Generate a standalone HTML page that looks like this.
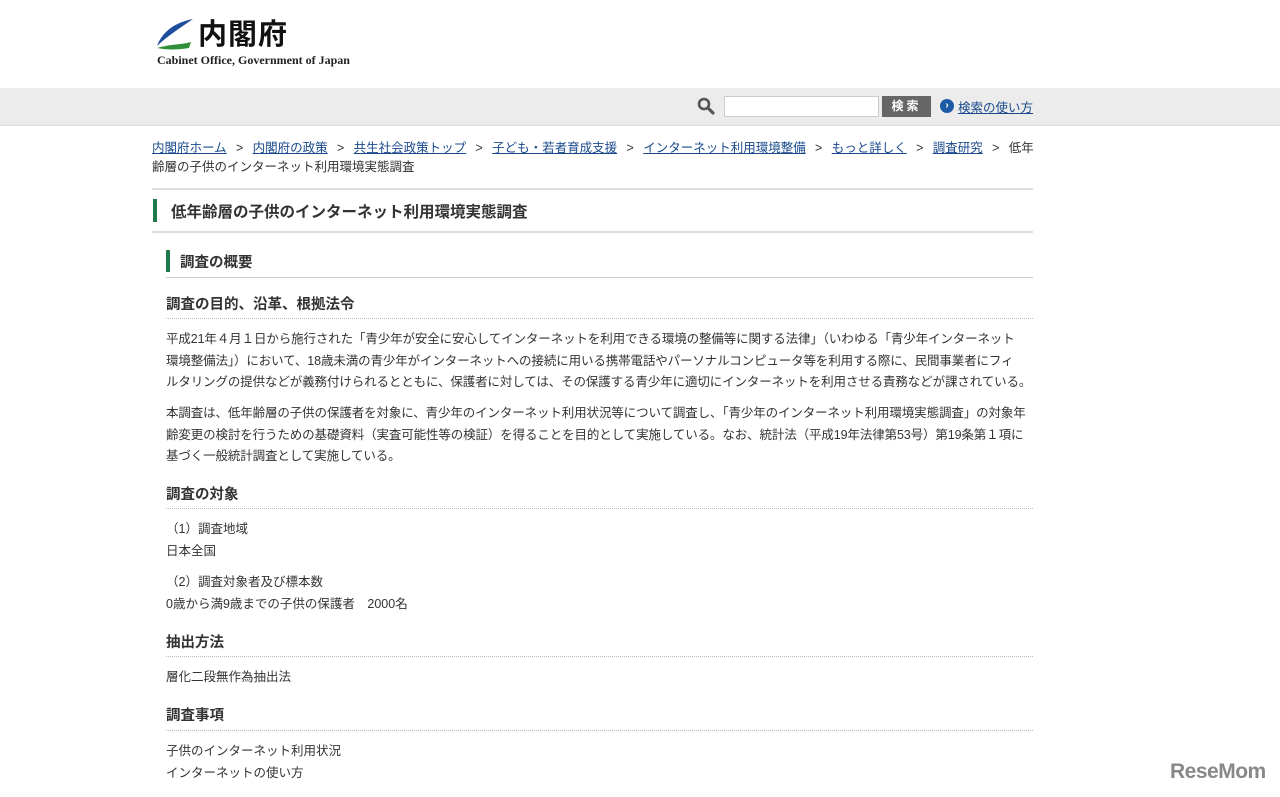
<!DOCTYPE html>
<html><head><meta charset="utf-8"><style>
*{margin:0;padding:0;box-sizing:border-box}
body{width:1280px;height:797px;overflow:hidden;background:#fff;font-family:"Liberation Sans","Noto Sans CJK JP",sans-serif;color:#333;font-size:12.5px;position:relative}
.a{position:absolute;white-space:nowrap}
a{color:#1a4a8c;text-decoration:underline}
.bar{position:absolute;left:0;top:88px;width:1280px;height:38px;background:#ececec;border-bottom:1px solid #ddd}
.hr{position:absolute;left:152px;width:881px;height:2px;background:#ddd}
.dot{position:absolute;left:166px;width:867px;border-top:1px dotted #bbb}
.h3{font-size:14.5px;font-weight:bold;color:#333}
p.a{line-height:21.5px}
p.t{letter-spacing:-0.12px}
.sep{display:inline-block;width:26px;text-align:center}
</style></head><body>
<svg class="a" style="left:155px;top:18px" width="40" height="34" viewBox="0 0 40 34"><path d="M38 1 C22 4 8 12 2 28 C10 20 22 12 38 1Z" fill="#1f4f9c"/><path d="M2 30 C14 26 26 27 36 24 L34 30 C22 32 12 32 2 30Z" fill="#2f8f3a"/><circle cx="9" cy="26" r="2.5" fill="#fff"/></svg>
<div class="a" style="left:198px;top:18px;font-size:29px;font-weight:bold;color:#111;letter-spacing:1px;line-height:34px">内閣府</div>
<div class="a" style="left:157px;top:53px;font-family:'Liberation Serif',serif;font-size:12px;font-weight:bold;color:#222">Cabinet Office, Government of Japan</div>
<div class="bar"></div>
<svg class="a" style="left:697px;top:97px" width="18" height="18" viewBox="0 0 18 18"><circle cx="7" cy="7" r="5" fill="none" stroke="#555" stroke-width="2.6"/><path d="M11 11 L16 16" stroke="#555" stroke-width="3.2" stroke-linecap="round"/></svg>
<div class="a" style="left:724px;top:96px;width:155px;height:21px;background:#fff;border:1px solid #ccc"></div>
<div class="a" style="left:882px;top:96px;width:49px;height:21px;background:#666;color:#fff;font-size:12px;font-weight:bold;text-align:center;line-height:21px;letter-spacing:3px">検索</div>
<div class="a" style="left:940px;top:99px;width:14px;height:14px;border-radius:50%;background:#1f5aa6;color:#fff;font-size:10px;line-height:14px;text-align:center;font-weight:bold">›</div>
<div class="a" style="left:958px;top:97px;font-size:12.5px"><a>検索の使い方</a></div>
<div class="a" style="left:152px;top:139px;line-height:18.5px;font-size:12.5px"><a>内閣府ホーム</a><span class="sep">&gt;</span><a>内閣府の政策</a><span class="sep">&gt;</span><a>共生社会政策トップ</a><span class="sep">&gt;</span><a>子ども・若者育成支援</a><span class="sep">&gt;</span><a>インターネット利用環境整備</a><span class="sep">&gt;</span><a>もっと詳しく</a><span class="sep">&gt;</span><a>調査研究</a><span class="sep">&gt;</span>低年<br>齢層の子供のインターネット利用環境実態調査</div>
<div class="hr" style="top:188px"></div>
<div class="a" style="left:153px;top:199px;width:4px;height:23px;background:#1e7a4a"></div>
<div class="a" style="left:171px;top:200px;font-size:15.5px;font-weight:bold;color:#333">低年齢層の子供のインターネット利用環境実態調査</div>
<div class="hr" style="top:231px"></div>
<div class="a" style="left:166px;top:250px;width:4px;height:22px;background:#1e7a4a"></div>
<div class="a" style="left:180px;top:251px;font-size:14.5px;font-weight:bold">調査の概要</div>
<div class="hr" style="top:277px;left:166px;width:867px;height:1px;background:#ccc"></div>
<div class="a h3" style="left:166px;top:293px">調査の目的、沿革、根拠法令</div>
<div class="dot" style="top:318px"></div>
<p class="a t" style="left:166px;top:329px">平成21年４月１日から施行された「青少年が安全に安心してインターネットを利用できる環境の整備等に関する法律」（いわゆる「青少年インターネット<br>環境整備法」）において、18歳未満の青少年がインターネットへの接続に用いる携帯電話やパーソナルコンピュータ等を利用する際に、民間事業者にフィ<br>ルタリングの提供などが義務付けられるとともに、保護者に対しては、その保護する青少年に適切にインターネットを利用させる責務などが課されている。</p>
<p class="a t" style="left:166px;top:403px">本調査は、低年齢層の子供の保護者を対象に、青少年のインターネット利用状況等について調査し、「青少年のインターネット利用環境実態調査」の対象年<br>齢変更の検討を行うための基礎資料（実査可能性等の検証）を得ることを目的として実施している。なお、統計法（平成19年法律第53号）第19条第１項に<br>基づく一般統計調査として実施している。</p>
<div class="a h3" style="left:166px;top:483px">調査の対象</div>
<div class="dot" style="top:508px"></div>
<p class="a" style="left:166px;top:519px">（1）調査地域<br>日本全国</p>
<p class="a" style="left:166px;top:572px">（2）調査対象者及び標本数<br>0歳から満9歳までの子供の保護者　2000名</p>
<div class="a h3" style="left:166px;top:631px">抽出方法</div>
<div class="dot" style="top:656px"></div>
<p class="a" style="left:166px;top:667px">層化二段無作為抽出法</p>
<div class="a h3" style="left:166px;top:704px">調査事項</div>
<div class="dot" style="top:730px"></div>
<p class="a" style="left:166px;top:741px">子供のインターネット利用状況<br>インターネットの使い方</p>
<div class="a" style="left:1170px;top:760px;font-size:21px;font-weight:bold;color:#888;letter-spacing:-0.5px">ReseMom</div>
</body></html>
